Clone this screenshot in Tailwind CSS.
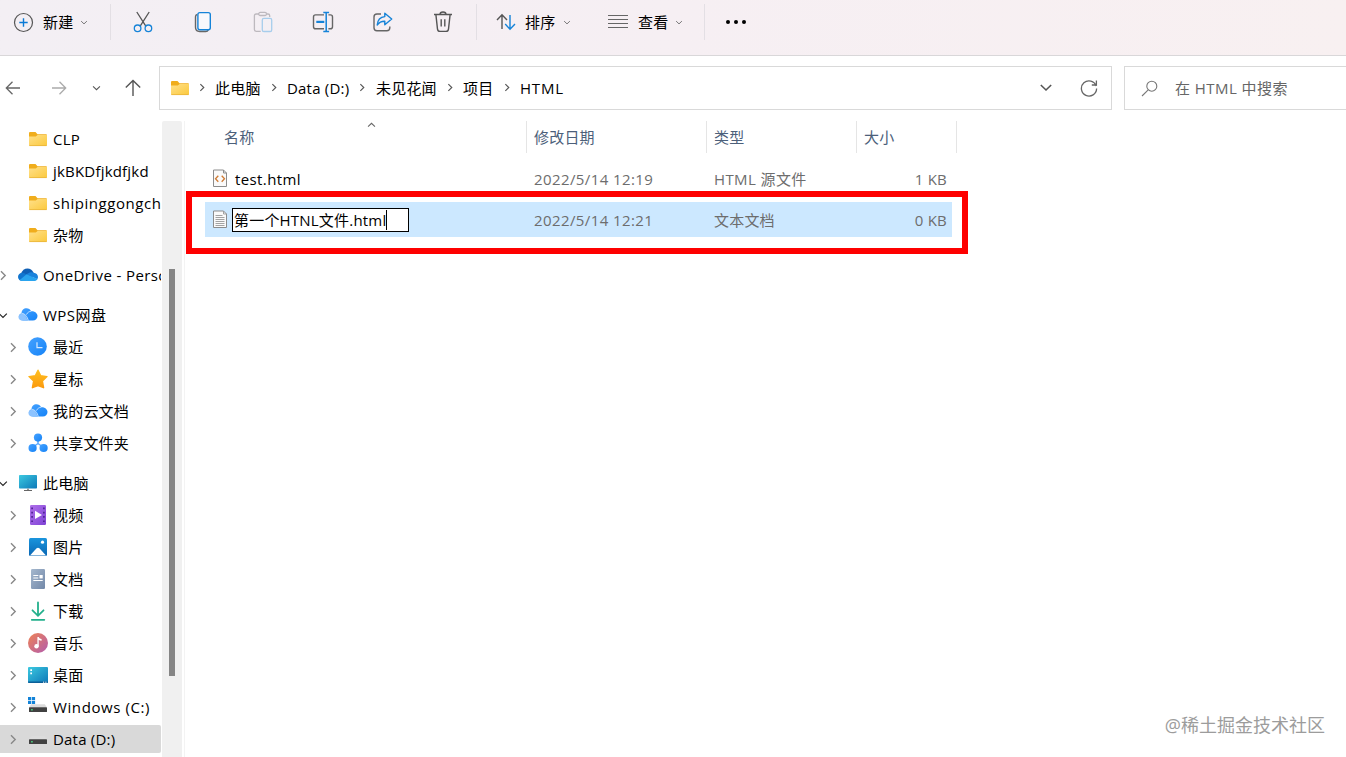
<!DOCTYPE html>
<html lang="zh-CN">
<head>
    <meta charset="UTF-8">
    <meta name="viewport" content="width=device-width, initial-scale=1.0">
    <title>HTML</title>
    <script src="https://cdn.jsdelivr.net/npm/@tailwindcss/browser@4"></script>
</head>
<body class="relative flex h-[757px] w-[1346px] flex-col overflow-hidden bg-white font-['Open_Sans','Noto_Sans_CJK_SC',sans-serif] text-[15px] leading-5 tracking-[0.2px] text-black">

    <!-- Iconos reutilizables -->
    <svg class="absolute size-0">
        <defs>
            <linearGradient id="gFolder" x1="0" y1="0" x2="1" y2="1"><stop offset="0" stop-color="#ffe08a"/><stop offset="1" stop-color="#fbc93d"/></linearGradient>
            <linearGradient id="gBlue" x1="0" y1="0" x2="1" y2="1"><stop offset="0" stop-color="#46a2ff"/><stop offset="1" stop-color="#1583f7"/></linearGradient>
            <linearGradient id="gPc" x1="0" y1="0" x2="1" y2="1"><stop offset="0" stop-color="#3cc9e0"/><stop offset="1" stop-color="#0d78b8"/></linearGradient>
            <linearGradient id="gStar" x1="0" y1="0" x2="0" y2="1"><stop offset="0" stop-color="#ffbf1f"/><stop offset="1" stop-color="#fb9a0e"/></linearGradient>
            <linearGradient id="gMusic" x1="0" y1="0" x2="1" y2="1"><stop offset="0" stop-color="#ef8354"/><stop offset="1" stop-color="#b25cae"/></linearGradient>
            <linearGradient id="gDoc" x1="0" y1="0" x2="1" y2="1"><stop offset="0" stop-color="#a5b8ce"/><stop offset="1" stop-color="#7288a8"/></linearGradient>
            <linearGradient id="gVideo" x1="0" y1="0" x2="1" y2="1"><stop offset="0" stop-color="#b070ea"/><stop offset="1" stop-color="#7f43d6"/></linearGradient>
            <linearGradient id="gPic" x1="0" y1="0" x2="0" y2="1"><stop offset="0" stop-color="#1a95dd"/><stop offset="1" stop-color="#0a67b4"/></linearGradient>
        </defs>
        <symbol id="folder" viewBox="0 0 20 20">
            <path d="M1 4a1 1 0 0 1 1-1h5.500l2 2.200H18a1 1 0 0 1 1 1V9H1z" fill="#f0ad1c"/>
            <path d="M1 7.500h6.800l1.800-1.600H19V16a1 1 0 0 1-1 1H2a1 1 0 0 1-1-1z" fill="url(#gFolder)"/>
            <path d="M1.300 16.600h17.400" stroke="#e9b43a" stroke-width=".8"/>
        </symbol>
        <symbol id="right" viewBox="0 0 8 12"><path d="M1.800 1.400 6.400 6l-4.600 4.600" fill="none" stroke="currentColor" stroke-width="1.500"/></symbol>
        <symbol id="down" viewBox="0 0 12 8"><path d="M1.400 1.800 6 6.200l4.600-4.400" fill="none" stroke="currentColor" stroke-width="1.400"/></symbol>
        <symbol id="cloud" viewBox="0 0 20 20">
            <path d="M5.200 15.500C3 15.500 .8 14 .8 11.700c0-1.700 1.200-3.200 2.700-3.500C3.600 5.300 5.800 3.300 8.500 3.300c2 0 3.800 1.100 4.700 2.900 3.500-.4 6.300 1.900 6.300 4.800 0 2.600-2 4.500-4.600 4.500z" fill="url(#gBlue)"/>
            <path d="M.5 12.300c0-2 1.600-3.500 3.500-3.500 2.600 0 4.300 2.500 5.600 6.700H4C2 15.500.5 14.100.5 12.300z" fill="#8cc3ff"/>
            <path d="M3.500 8.300c3.500.2 5.700 3.200 6.800 7.200M8.400 9.600c1-2 2.600-3.200 4.800-3.400" fill="none" stroke="#e5f1ff" stroke-width=".8"/>
        </symbol>
        <symbol id="drive" viewBox="0 0 20 20">
            <path d="M3.200 7.200h13.600l2.200 3.300H1z" fill="#dcdcdc"/>
            <rect x="1" y="10.300" width="18" height="4.700" rx=".6" fill="#414141"/>
            <rect x="3" y="12.200" width="1.800" height="1.200" fill="#4be38a"/>
        </symbol>
    </svg>

    <!-- Barra de comandos -->
    <header class="flex h-14 shrink-0 items-start border-b border-[#d9d7d9] bg-linear-to-r from-[#f3eff4] via-[#f6eff3] to-[#f8f0f1]">
        <div class="flex h-11 w-[110px] items-center pl-[13px]">
            <svg class="size-[21px]" viewBox="0 0 21 21" fill="none"><circle cx="10.500" cy="10.500" r="9" stroke="#555" stroke-width="1.200"/><path d="M10.500 6.300v8.400M6.300 10.500h8.400" stroke="#0a7ad6" stroke-width="1.400"/></svg>
            <span class="ml-[9px]">新建</span>
            <svg class="ml-[7px] h-[5px] w-2 text-[#666]"><use href="#down"/></svg>
        </div>
        <div class="mt-1 h-9 w-px bg-[#e3dfe4]"></div>
        <div class="flex h-11 w-[365px] items-center px-0.5">
            <div class="flex w-[60px] justify-center">
                <svg class="size-6" viewBox="0 0 24 24" fill="none" stroke-width="1.300"><path d="M5.800 2 15 16.400M18.200 2 9 16.400" stroke="#555"/><circle cx="6.600" cy="18.300" r="3.300" stroke="#1583d8"/><circle cx="17.400" cy="18.300" r="3.300" stroke="#1583d8"/></svg>
            </div>
            <div class="flex w-[60px] justify-center">
                <svg class="size-6" viewBox="0 0 24 24" fill="none" stroke-width="1.400"><path d="M6.300 4.300c-1.300.4-1.800 1.200-1.800 2.400v10.600c0 2.700 1.600 4.200 4.200 4.200h6.100c1.300 0 2-.5 2.500-1.500" stroke="#666"/><rect x="6.900" y="2.600" width="12.400" height="17.200" rx="2" stroke="#1583d8" fill="#f8f8fc"/></svg>
            </div>
            <div class="flex w-[60px] justify-center">
                <svg class="size-6" viewBox="0 0 24 24" fill="none" stroke-width="1.300"><path d="M8 4H5.200C4 4 3.400 4.700 3.400 5.700v13.900c0 1 .7 1.700 1.800 1.700h4.500M15.500 4H17c1.200 0 1.700.6 1.700 1.700V7" stroke="#bdb9be"/><rect x="7.700" y="2.400" width="7.800" height="3.100" rx="1.500" stroke="#bdb9be"/><rect x="11.300" y="8.300" width="9.400" height="13.200" rx="1.600" stroke="#a7cdec"/></svg>
            </div>
            <div class="flex w-[60px] justify-center">
                <svg class="size-6" viewBox="0 0 24 24" fill="none" stroke-width="1.400"><path d="M13 4.900H4.600c-1.400 0-2.100.8-2.100 2v9.800c0 1.300.8 2.100 2.100 2.100H13M17.400 4.900h2c1.400 0 2.100.8 2.100 2v9.800c0 1.300-.8 2.100-2.100 2.100h-2" stroke="#666"/><path d="M5.300 11.900h8" stroke="#1583d8" stroke-width="2.200"/><path d="M15.200 2.500v19M12.300 2.500h5.800M12.300 21.500h5.800" stroke="#1583d8" stroke-width="1.500"/></svg>
            </div>
            <div class="flex w-[60px] justify-center">
                <svg class="size-6" viewBox="0 0 24 24" fill="none" stroke-width="1.400" stroke-linejoin="round"><path d="M10 4H6C4.300 4 3 5 3 6.900v10.800c0 1.900 1.200 3 3 3h9.800c1.800 0 3-1.100 3-3v-1.200" stroke="#666"/><path d="M13.800 3.200 20.700 9l-6.900 5.800v-3.500c-3.200-.1-5.600 1-7.600 3.700.4-5 3-8 7.600-8.400z" stroke="#1583d8"/></svg>
            </div>
            <div class="flex w-[60px] justify-center">
                <svg class="size-6" viewBox="0 0 24 24" fill="none" stroke="#555" stroke-width="1.400"><path d="M3 4.500h18M9 4.300c0-1.400 1-2.300 3-2.300s3 .9 3 2.300M4.900 4.700l1.600 14.400c.2 1.500 1 2.300 2.500 2.300h6c1.500 0 2.300-.8 2.500-2.300l1.600-14.400M10.200 9.300v7.200M13.800 9.300v7.200"/></svg>
            </div>
        </div>
        <div class="mt-1 h-9 w-px bg-[#e3dfe4]"></div>
        <div class="flex h-11 w-[227px] items-center pl-[19px]">
            <svg class="h-[18px] w-5" viewBox="0 0 20 18" fill="none" stroke-width="1.400"><path d="M6 16V1.800M1 7l5-5.200L11 7" stroke="#555"/><path d="M14 2v14.200M9.200 11l4.800 5.200 5-5.200" stroke="#1583d8"/></svg>
            <span class="ml-[9px] w-[31px]">排序</span>
            <svg class="ml-[7px] h-[5px] w-2 text-[#666]"><use href="#down"/></svg>
            <svg class="ml-[37px] h-4 w-5" viewBox="0 0 20 16" stroke="#666" stroke-width="1.200"><path d="M0 1.500h20M0 5.500h20M0 9.500h20M0 13.500h20"/></svg>
            <span class="ml-[10px] w-[30px] whitespace-nowrap">查看</span>
            <svg class="ml-[7px] h-[5px] w-2 text-[#666]"><use href="#down"/></svg>
        </div>
        <div class="mt-1 h-9 w-px bg-[#e3dfe4]"></div>
        <div class="flex h-11 items-center gap-1 pl-[21px]">
            <i class="size-1 rounded-full bg-black"></i>
            <i class="size-1 rounded-full bg-black"></i>
            <i class="size-1 rounded-full bg-black"></i>
        </div>
    </header>

    <!-- Navegación, ruta y búsqueda -->
    <nav class="flex h-[65px] shrink-0 items-start pt-[10px]">
        <div class="flex h-11 w-[159px] items-center pl-[5px]">
            <svg class="size-4" viewBox="0 0 16 16" fill="none" stroke="#666" stroke-width="1.300"><path d="M15 8H1.500M7.500 1.800 1.300 8l6.200 6.200"/></svg>
            <svg class="ml-[30px] size-4" viewBox="0 0 16 16" fill="none" stroke="#aaa" stroke-width="1.300"><path d="M1 8h13.500M8.500 1.800 14.700 8l-6.200 6.200"/></svg>
            <svg class="ml-[25px] h-[6px] w-[9px] text-[#555]"><use href="#down"/></svg>
            <svg class="ml-[23px] size-[18px]" viewBox="0 0 18 18" fill="none" stroke="#555" stroke-width="1.400"><path d="M9 17V1.500M1.800 8.600 9 1.400l7.200 7.200"/></svg>
        </div>
        <div class="flex h-11 w-[953px] items-center border border-[#d9d9d9] pb-px pl-[10px]">
            <svg class="size-5"><use href="#folder"/></svg>
            <svg class="ml-[9px] h-[9px] w-[6px] text-[#555]"><use href="#right"/></svg>
            <span class="ml-[10px] w-[46px]">此电脑</span>
            <svg class="ml-[10px] h-[9px] w-[6px] text-[#555]"><use href="#right"/></svg>
            <span class="ml-[10px] w-[62px] whitespace-nowrap">Data (D:)</span>
            <svg class="ml-[10px] h-[9px] w-[6px] text-[#555]"><use href="#right"/></svg>
            <span class="ml-[11px] w-[61px]">未见花闻</span>
            <svg class="ml-[10px] h-[9px] w-[6px] text-[#555]"><use href="#right"/></svg>
            <span class="ml-[10px] w-[31px]">项目</span>
            <svg class="ml-[10px] h-[9px] w-[6px] text-[#555]"><use href="#right"/></svg>
            <span class="ml-[10px] tracking-[0.8px]">HTML</span>
            <svg class="ml-auto h-[9px] w-[14px] text-[#555]"><use href="#down"/></svg>
            <svg class="mr-[13px] ml-[27px] size-[18px]" viewBox="0 0 18 18" fill="none" stroke="#666" stroke-width="1.300"><path d="M16.200 7A7.600 7.600 0 1 0 16.600 9.500M16.400 1.500V6h-4.600"/></svg>
        </div>
        <div class="ml-3 flex h-11 grow items-center border border-r-0 border-[#d9d9d9] pl-4 text-[#666]">
            <svg class="size-[17px]" viewBox="0 0 17 17" fill="none" stroke="#777" stroke-width="1.100"><circle cx="10.800" cy="6.200" r="5"/><path d="M7.200 9.800 1 16"/></svg>
            <span class="ml-[17px] tracking-[0.45px]">在 HTML 中搜索</span>
        </div>
    </nav>

    <div class="flex min-h-0 grow">
        <!-- Panel lateral -->
        <aside class="w-[161px] shrink-0 overflow-hidden pt-0.5 whitespace-nowrap">
            <div class="flex h-8 items-center gap-[5px] pl-7"><svg class="size-5 shrink-0"><use href="#folder"/></svg>CLP</div>
            <div class="flex h-8 items-center gap-[5px] pl-7"><svg class="size-5 shrink-0"><use href="#folder"/></svg>jkBKDfjkdfjkd</div>
            <div class="flex h-8 items-center gap-[5px] pl-7 tracking-[0.55px]"><svg class="size-5 shrink-0"><use href="#folder"/></svg>shipinggongch</div>
            <div class="flex h-8 items-center gap-[5px] pl-7"><svg class="size-5 shrink-0"><use href="#folder"/></svg>杂物</div>

            <div class="mt-2 flex h-8 items-center tracking-[0.4px]">
                <svg class="-ml-px h-[11px] w-2 shrink-0 text-[#888]"><use href="#right"/></svg>
                <svg class="mr-[5px] ml-[11px] size-5 shrink-0" viewBox="0 0 20 20">
                    <path d="M5 15.800 3 8.500C4.200 5.400 6.500 3.500 9.500 3.500c2.600 0 4.800 1.500 5.800 3.800L14 14z" fill="#0f5fb5"/>
                    <path d="M4.500 16C2 16 0 14.200 0 11.900 0 9.600 1.900 7.800 4.400 7.800c1 0 2 .3 2.900.9l7.200 5.200z" fill="#1175cf"/>
                    <path d="m8.500 9.300 3.200-1.700c1.300-.6 2.900-.5 4 .1C18.200 7.900 20 9.700 20 12c0 .8-.3 1.700-.8 2.300z" fill="#1b83dc"/>
                    <path d="M1.700 15 8.600 9.300l10.900 4.600c-.7 1.300-1.900 2.100-3.500 2.100H4.500c-1.100 0-2.100-.4-2.800-1z" fill="#2aa4ee"/>
                </svg>OneDrive - Perso
            </div>

            <div class="mt-2 flex h-8 items-center">
                <svg class="-ml-0.5 h-[7px] w-[10px] shrink-0 text-[#222]"><use href="#down"/></svg>
                <svg class="mr-[5px] ml-[10px] size-5 shrink-0"><use href="#cloud"/></svg><span class="tracking-[0.5px]">WPS网盘</span>
            </div>
            <div class="flex h-8 items-center pl-[9px]">
                <svg class="h-[11px] w-2 shrink-0 text-[#888]"><use href="#right"/></svg>
                <svg class="mr-[5px] ml-[11px] size-5 shrink-0" viewBox="0 0 20 20" fill="none"><circle cx="9.500" cy="9.500" r="9.300" fill="url(#gBlue)"/><path d="M9 5.300v5.400h5.500" stroke="#d7eaff" stroke-width="1.200"/></svg>最近
            </div>
            <div class="flex h-8 items-center pl-[9px]">
                <svg class="h-[11px] w-2 shrink-0 text-[#888]"><use href="#right"/></svg>
                <svg class="mr-[5px] ml-[11px] size-5 shrink-0" viewBox="0 0 20 20"><path d="m10 1.200 2.700 5.500 6.300.9-4.600 4.400 1.200 6.700L10 16.500l-5.600 2.200L5.600 12 1 7.600l6.300-.9z" fill="url(#gStar)" stroke="url(#gStar)" stroke-width="1.400" stroke-linejoin="round"/></svg>星标
            </div>
            <div class="flex h-8 items-center pl-[9px]">
                <svg class="h-[11px] w-2 shrink-0 text-[#888]"><use href="#right"/></svg>
                <svg class="mr-[5px] ml-[11px] size-5 shrink-0"><use href="#cloud"/></svg>我的云文档
            </div>
            <div class="flex h-8 items-center pl-[9px]">
                <svg class="h-[11px] w-2 shrink-0 text-[#888]"><use href="#right"/></svg>
                <svg class="mr-[5px] ml-[11px] size-5 shrink-0" viewBox="0 0 20 20" fill="url(#gBlue)"><path d="M10 5v6M10 10.500l-5.500 4M10 10.500l5.500 4" stroke="#5caaff" stroke-width="1.500"/><circle cx="10" cy="4.600" r="4.100"/><circle cx="4.600" cy="15" r="4.100"/><circle cx="15.600" cy="15" r="4.100"/></svg>共享文件夹
            </div>

            <div class="mt-2 flex h-8 items-center">
                <svg class="-ml-0.5 h-[7px] w-[10px] shrink-0 text-[#222]"><use href="#down"/></svg>
                <svg class="mr-[5px] ml-[10px] size-5 shrink-0" viewBox="0 0 20 20"><rect x="1" y="2" width="18" height="13.500" rx=".8" fill="url(#gPc)"/><path d="M9 15.500h2v1.700H9z" fill="#999"/><path d="M6 17h8v1H6z" fill="#666"/></svg>此电脑
            </div>
            <div class="flex h-8 items-center pl-[9px]">
                <svg class="h-[11px] w-2 shrink-0 text-[#888]"><use href="#right"/></svg>
                <svg class="mr-[5px] ml-[11px] size-5 shrink-0" viewBox="0 0 20 20"><rect x="2" y="0" width="16" height="20" rx="1.200" fill="url(#gVideo)"/><path d="M4.100 2.500v16M15.900 2.500v16" stroke="#4b2090" stroke-width="1.600" stroke-dasharray="1.700 2.600"/><path d="m7 5.800 7 4.100-7 4.100z" fill="#fff"/></svg>视频
            </div>
            <div class="flex h-8 items-center pl-[9px]">
                <svg class="h-[11px] w-2 shrink-0 text-[#888]"><use href="#right"/></svg>
                <svg class="mr-[5px] ml-[11px] size-5 shrink-0" viewBox="0 0 20 20"><rect x="1" y="1" width="18" height="18" rx="1.500" fill="url(#gPic)"/><path d="m2 18.500 6.600-7.200c.9-.9 1.900-.9 2.800 0l6.600 7.200z" fill="#fff"/><circle cx="14.500" cy="5.200" r="1.600" fill="#fff"/></svg>图片
            </div>
            <div class="flex h-8 items-center pl-[9px]">
                <svg class="h-[11px] w-2 shrink-0 text-[#888]"><use href="#right"/></svg>
                <svg class="mr-[5px] ml-[11px] size-5 shrink-0" viewBox="0 0 20 20"><rect x="3" y="0" width="14" height="20" rx="1.200" fill="url(#gDoc)"/><path d="M5.300 6.500h5M5.300 9h5M5.300 11.500h9.400" stroke="#fff" stroke-width="1.200"/><rect x="11.500" y="6" width="3.200" height="3.400" fill="#fff"/></svg>文档
            </div>
            <div class="flex h-8 items-center pl-[9px]">
                <svg class="h-[11px] w-2 shrink-0 text-[#888]"><use href="#right"/></svg>
                <svg class="mr-[5px] ml-[11px] size-5 shrink-0" viewBox="0 0 20 20" fill="none" stroke="#23b08c" stroke-width="1.800" stroke-linecap="round"><path d="M10 1.500v13M4.500 9.300l5.500 5.500 5.500-5.500M3.800 18.800h12.500"/></svg>下载
            </div>
            <div class="flex h-8 items-center pl-[9px]">
                <svg class="h-[11px] w-2 shrink-0 text-[#888]"><use href="#right"/></svg>
                <svg class="mr-[5px] ml-[11px] size-5 shrink-0" viewBox="0 0 20 20"><circle cx="10" cy="10" r="10" fill="url(#gMusic)"/><circle cx="8.500" cy="13.200" r="2.200" fill="#fff"/><path d="M9.400 4h1.300c.5 1.300 1.500 1.900 2.900 2v1.700c-1.200 0-2.100-.3-2.900-1v6.500H9.400z" fill="#fff"/></svg>音乐
            </div>
            <div class="flex h-8 items-center pl-[9px]">
                <svg class="h-[11px] w-2 shrink-0 text-[#888]"><use href="#right"/></svg>
                <svg class="mr-[5px] ml-[11px] size-5 shrink-0" viewBox="0 0 20 20"><rect x="0" y="2" width="20" height="16" rx="1" fill="url(#gPc)"/><path d="M2.300 4.300H4V6H2.300zM2.300 7.500H4v1.700H2.300z" fill="#fff"/><path d="M0 16.500h20V17a1 1 0 0 1-1 1H1a1 1 0 0 1-1-1z" fill="#0c5f98"/><path d="M15 17.200h1.200M17.300 17.200h1.200" stroke="#fff"/></svg>桌面
            </div>
            <div class="flex h-8 items-center pl-[9px] tracking-[0.6px]">
                <svg class="h-[11px] w-2 shrink-0 text-[#888]"><use href="#right"/></svg>
                <svg class="mr-[5px] ml-[11px] size-5 shrink-0" viewBox="0 0 20 20"><use href="#drive" width="20" height="20"/><path d="M0 0h3.200v3.200H0zM3.900 0h3.200v3.200H3.900zM0 3.900h3.200v3.200H0zM3.900 3.900h3.200v3.200H3.900z" fill="#1383d8"/></svg>Windows (C:)
            </div>
            <div class="my-0.5 flex h-7 items-center rounded-r-xs bg-[#d9d9d9] pl-[9px]">
                <svg class="h-[11px] w-2 shrink-0 text-[#888]"><use href="#right"/></svg>
                <svg class="mr-[5px] ml-[11px] size-5 shrink-0"><use href="#drive"/></svg>Data (D:)
            </div>
        </aside>

        <!-- Barra de desplazamiento -->
        <div class="ml-px flex w-5 shrink-0 justify-center rounded-t-xs bg-[#f0f0f0]">
            <div class="mt-[148px] h-[407px] w-1.5 bg-[#858585]"></div>
        </div>
        <div class="ml-0.5 w-px shrink-0 bg-[#f3f3f3]"></div>

        <!-- Lista de archivos -->
        <main class="grow pl-5 text-[#6d6d6d]">
            <div class="grid h-8 w-[752px] grid-cols-[322px_180px_150px_100px] text-[#4c607a]">
                <div class="relative flex items-center border-r border-[#e5e5e5] pl-[19px]">
                    名称
                    <svg class="absolute top-px left-[161px] h-[6px] w-[11px] rotate-180 text-[#666]"><use href="#down"/></svg>
                </div>
                <div class="flex items-center border-r border-[#e5e5e5] pl-[7px]">修改日期</div>
                <div class="flex items-center border-r border-[#e5e5e5] pl-[7px]">类型</div>
                <div class="flex items-center border-r border-[#e5e5e5] pl-[7px]">大小</div>
            </div>
            <div class="mt-2 grid h-[35px] w-[747px] grid-cols-[322px_180px_150px_95px] items-center">
                <div class="flex items-center pl-[7px] text-black">
                    <svg class="h-[19px] w-4" viewBox="0 0 16 19" fill="none"><path d="M1.500 1h10l3 3v13.500h-13z" fill="#fafafa" stroke="#8c8c8c"/><path d="M11.500 1v3h3" stroke="#8c8c8c"/><path d="M6.300 6.700 3.500 9.700l2.800 3M9.700 6.700l2.800 3-2.800 3" stroke="#d07b35" stroke-width="1.300"/></svg>
                    <span class="ml-[7px] tracking-[0.4px]">test.html</span>
                </div>
                <div class="pl-[7px] tracking-[0.4px]">2022/5/14 12:19</div>
                <div class="pl-[7px] tracking-[0.4px]">HTML 源文件</div>
                <div class="pr-[5px] text-right">1 KB</div>
            </div>
            <div class="mt-[6px] grid h-[35px] w-[747px] grid-cols-[322px_180px_150px_95px] items-center bg-[#cce8ff]">
                <div class="flex items-center pl-[7px] text-black">
                    <svg class="h-[19px] w-4" viewBox="0 0 16 19" fill="none"><path d="M1.500 1h10l3 3v13.500h-13z" fill="#fafafa" stroke="#8c8c8c"/><path d="M11.500 1v3h3M3.500 5.500h7M3.500 7.500h9M3.500 9.500h9M3.500 11.500h9M3.500 13.500h9M3.500 15.500h9" stroke="#999" stroke-width=".9"/></svg>
                    <div class="ml-1 flex h-6 w-[177px] items-center border border-black bg-white pl-px">
                        第一个HTNL文件.html<i class="h-5 w-px bg-black"></i>
                    </div>
                </div>
                <div class="pl-[7px] tracking-[0.4px]">2022/5/14 12:21</div>
                <div class="pl-[7px]">文本文档</div>
                <div class="pr-[5px] text-right">0 KB</div>
            </div>
        </main>
    </div>

    <!-- Recuadro rojo y marca de agua -->
    <div class="absolute top-[191px] left-[186px] h-[63px] w-[782px] border-6 border-[#fe0000]"></div>
    <div class="absolute right-[21px] bottom-5 text-lg leading-6 tracking-normal text-[#9c9c9c]">@稀土掘金技术社区</div>
</body>
</html>
